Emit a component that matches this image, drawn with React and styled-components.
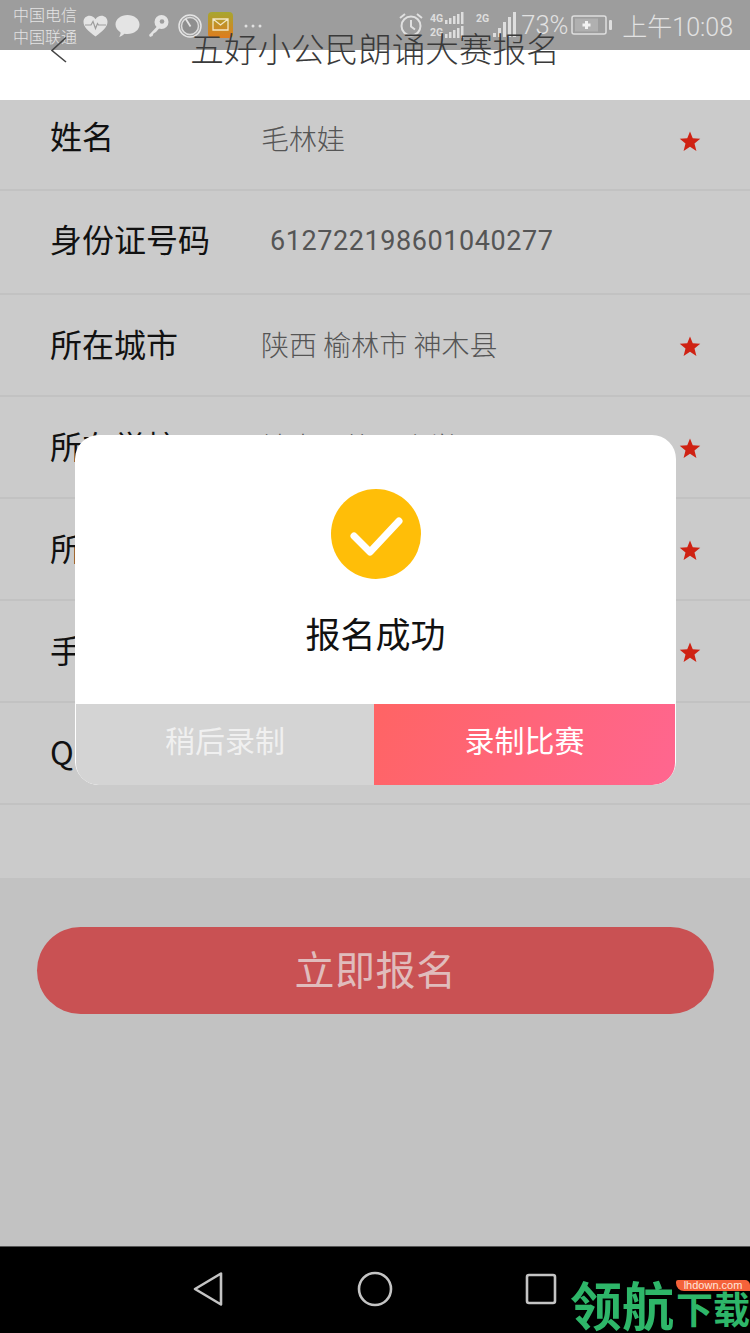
import React from 'react'
import styled, { createGlobalStyle } from 'styled-components'

const Global = createGlobalStyle`
  html, body { margin: 0; padding: 0; background: #c2c2c2; }
  #root { width: 750px; height: 1333px; overflow: hidden; }
  * { box-sizing: border-box; }
`

const Page = styled.div`
  position: relative;
  width: 750px;
  height: 1333px;
  display: flex;
  flex-direction: column;
  overflow: hidden;
  font-family: Roboto, "Noto Sans CJK SC", sans-serif;
`

const StatusBar = styled.div`
  height: 50px;
  flex: none;
  background: #9d9d9d;
  display: flex;
  align-items: flex-start;
  padding: 0 17px 0 13px;
  color: #e2e2e2;
`

const Carriers = styled.div`
  width: 70px;
  margin-top: 3px;
  font-size: 16px;
  line-height: 22px;
  font-family: "Noto Sans CJK SC", sans-serif;
  font-weight: 300;
  color: #e4e4e4;
`

const NotifyIcons = styled.div`
  display: flex;
  align-items: center;
  gap: 7px;
  margin-top: 13px;
  height: 25px;
`

const Spacer = styled.div`
  flex: 1;
`

const SystemIcons = styled.div`
  display: flex;
  align-items: center;
  margin-top: 11px;
  height: 28px;
`

const Percent = styled.span`
  font-size: 25.5px;
  font-weight: 300;
  margin-left: 3px;
  width: 48px;
`

const Clock = styled.span`
  font-size: 25px;
  font-weight: 300;
  margin-left: 9px;
  white-space: nowrap;
  font-family: Roboto, "Noto Sans CJK SC", sans-serif;
`

const Header = styled.div`
  height: 50px;
  flex: none;
  background: #fff;
  display: flex;
  justify-content: center;
  position: relative;
`

const BackIcon = styled.svg`
  position: absolute;
  left: 50px;
  top: -14px;
  width: 18px;
  height: 28px;
`

const Title = styled.div`
  margin-top: -24px;
  font-size: 33.6px;
  line-height: 44px;
  height: 44px;
  color: #3a3a3a;
  font-family: "Noto Sans CJK SC", sans-serif;
  font-weight: 300;
`

const Form = styled.div`
  background: #cbcbcb;
  height: 778px;
  flex: none;
`

const Row = styled.div`
  height: ${p => p.$h}px;
  border-bottom: 2px solid #c2c2c2;
  display: flex;
  align-items: center;
  padding-left: 50px;
  padding-right: 49px;
  padding-bottom: ${p => p.$shift || 0}px;
`

const Label = styled.div`
  width: ${p => p.$w || 211}px;
  padding-bottom: ${p => p.$lift}px;
  font-size: 32px;
  line-height: 40px;
  color: #111;
  font-family: "Noto Sans CJK SC", sans-serif;
  font-weight: 400;
  flex: none;
  white-space: nowrap;
`

const Value = styled.div`
  flex: 1;
  font-size: 28px;
  color: #555;
  font-family: "Noto Sans CJK SC", Roboto, sans-serif;
  font-weight: 300;
  white-space: nowrap;
`

const IdValue = styled(Value)`
  font-family: Roboto, sans-serif;
  font-size: 27px;
  font-weight: 400;
  letter-spacing: 0.57px;
`

const Star = styled.svg`
  width: 22px;
  height: 22px;
  margin-left: 1px;
  margin-top: ${p => p.$drop}px;
  flex: none;
`

const Bottom = styled.div`
  flex: 1;
  background: #c2c2c2;
  display: flex;
  flex-direction: column;
  padding: 49px 36px 0 37px;
`

const SubmitBtn = styled.div`
  height: 87px;
  border-radius: 44px;
  background: #c95153;
  color: #e0bcbc;
  font-size: 40px;
  font-weight: 400;
  font-family: "Noto Sans CJK SC", sans-serif;
  letter-spacing: 0.5px;
  display: flex;
  align-items: center;
  justify-content: center;
  padding-bottom: 6px;
`

const NavBar = styled.div`
  height: 87px;
  flex: none;
  background: #000;
  border-top: 1px solid #555;
  display: flex;
  align-items: center;
  position: relative;
  padding-left: 192px;
  gap: 133px;
  padding-bottom: 2px;
`

const Dialog = styled.div`
  position: absolute;
  left: 75px;
  top: 435px;
  width: 601px;
  height: 350px;
  border-radius: 24px;
  background: #fff;
  overflow: hidden;
  display: flex;
  flex-direction: column;
  padding: 0 1px;
`

const DialogBody = styled.div`
  flex: 1;
  display: flex;
  flex-direction: column;
  align-items: center;
  padding-top: 54px;
`

const CheckIcon = styled.svg`
  width: 90px;
  height: 90px;
`

const DialogText = styled.div`
  margin-top: 31px;
  font-size: 35px;
  line-height: 46px;
  color: #111;
  font-family: "Noto Sans CJK SC", sans-serif;
  font-weight: 400;
`

const DialogActions = styled.div`
  height: 81px;
  display: flex;
  flex: none;
  border-radius: 0 0 22px 22px;
  overflow: hidden;
`

const Action = styled.div`
  flex: none;
  width: ${p => p.$w}px;
  background: ${p => p.$primary ? 'linear-gradient(115deg, #ff6464 0%, #ff6690 100%)' : '#d4d4d4'};
  color: ${p => p.$primary ? '#fff' : '#f0f0f0'};
  font-size: 30px;
  font-family: "Noto Sans CJK SC", sans-serif;
  font-weight: 400;
  display: flex;
  align-items: center;
  justify-content: center;
  padding-bottom: 12px;
`

const Watermark = styled.div`
  position: absolute;
  left: 570px;
  top: 1274px;
  width: 180px;
  height: 59px;
  display: flex;
  align-items: flex-end;
  color: #2eb669;
  font-family: "Noto Sans CJK SC", sans-serif;
  font-weight: 700;
  white-space: nowrap;
`

const MarkBig = styled.span`
  font-size: 52px;
  line-height: 59px;
`

const MarkSmall = styled.span`
  font-size: 37px;
  line-height: 50px;
  margin-left: 2px;
`

const MarkTag = styled.div`
  position: absolute;
  right: 0;
  top: 6px;
  width: 74px;
  height: 11px;
  background: #f4623a;
  border-radius: 2px 5px 0 8px;
  color: #ffe6dc;
  font-family: "Liberation Sans", sans-serif;
  font-size: 11px;
  line-height: 11px;
  font-weight: 400;
  text-align: center;
`

const StarShape = ({ drop }) => (
  <Star viewBox="0 0 24 24" $drop={drop}>
    <path d="M12 1.500l3 7.600 8.200.5-6.300 5.200 2.100 8-7-4.400-7 4.400 2.100-8L.8 9.600 9 9.100z" fill="#cf2213" />
  </Star>
)

const rows = [
  { label: '姓名', value: '毛林娃', h: 91, star: true, shift: 14, lift: 6, drop: 7 },
  { label: '身份证号码', id: '612722198601040277', h: 104, shift: 2, lift: 6 },
  { label: '所在城市', value: '陕西 榆林市 神木县', h: 102, star: true, shift: 2, lift: 2, drop: 3 },
  { label: '所在学校', value: '神木县第一小学', h: 102, star: true, shift: 2, lift: 2, drop: 3 },
  { label: '所在年级', h: 102, star: true, shift: 2, lift: 2, drop: 3 },
  { label: '手机号码', h: 102, star: true, shift: 2, lift: 2, drop: 3 },
  { label: 'QQ号码', h: 102, shift: 2, lift: 2 },
]

const StatusLeft = () => (
  <NotifyIcons>
    <svg width="25" height="22" viewBox="0 0 25 22">
      <path d="M12.500 21.500C5 16 .5 12 .5 6.800.5 3 3.400.8 6.500.8c2.500 0 4.700 1.300 6 3.400 1.300-2.100 3.500-3.400 6-3.400 3.100 0 6 2.200 6 6 0 5.200-4.500 9.200-12 14.700z" fill="#e4e4e4" />
      <path d="M2 10h6l2-3.500 2.500 7 2-5 1 1.500h7.500" fill="none" stroke="#9d9d9d" strokeWidth="1.200" />
    </svg>
    <svg width="25" height="24" viewBox="0 0 25 24">
      <path d="M12.500 1C19 1 24.500 5 24.500 10.500S19 20 12.500 20c-1 0-2-.1-3-.3-1.500 1.500-3.500 2.800-5.500 3.100 1-1.200 1.600-2.800 1.600-4.400C2.600 16.600.5 13.800.5 10.500.5 5 6 1 12.500 1z" fill="#e4e4e4" />
    </svg>
    <svg width="22" height="24" viewBox="0 0 22 24">
      <circle cx="14.500" cy="8" r="7" fill="#e4e4e4" />
      <circle cx="15" cy="7.500" r="2.300" fill="#9d9d9d" />
      <path d="M10 12.500L2 21l1 2 2.500-1 1-2.500L9 18l3.500-4z" fill="#e4e4e4" />
    </svg>
    <svg width="24" height="24" viewBox="0 0 24 24" style={{ marginLeft: 2 }}>
      <circle cx="12" cy="12" r="11" fill="none" stroke="#e4e4e4" strokeWidth="1.500" />
      <circle cx="12" cy="12" r="8.500" fill="#8f8f8f" />
      <circle cx="12" cy="12" r="8.500" fill="none" stroke="#dcdcdc" strokeWidth="1.500" />
      <path d="M7.500 4.500l5 8" stroke="#e4e4e4" strokeWidth="1.800" />
    </svg>
    <svg width="25" height="26" viewBox="0 0 25 26" style={{ marginTop: -2, marginLeft: -1 }}>
      <defs>
        <linearGradient id="mailBg" x1="0" y1="0" x2="0" y2="1">
          <stop offset="0" stopColor="#a7a630" />
          <stop offset="1" stopColor="#df7c1e" />
        </linearGradient>
      </defs>
      <rect width="25" height="26" rx="4" fill="url(#mailBg)" />
      <path d="M5 7h15v11H5zM5 7l7.500 6L20 7" fill="none" stroke="#f2e6c4" strokeWidth="1.300" />
    </svg>
    <svg width="20" height="6" viewBox="0 0 20 6" style={{ marginLeft: 3, marginTop: 1 }}>
      <circle cx="3" cy="3" r="1.500" fill="#e0e0e0" />
      <circle cx="10" cy="3" r="1.500" fill="#e0e0e0" />
      <circle cx="17" cy="3" r="1.500" fill="#e0e0e0" />
    </svg>
  </NotifyIcons>
)

const Signal = ({ x, y }) => (
  <g fill="#dedede">
    {[0, 1, 2, 3, 4].map(i => (
      <rect key={i} x={x + i * 4} y={y + 8 - i * 2} width="2.500" height={4 + i * 2} />
    ))}
  </g>
)

const StatusRight = () => (
  <SystemIcons>
    <svg width="24" height="26" viewBox="0 0 24 26" style={{ marginRight: 7 }}>
      <circle cx="12" cy="14" r="9.500" fill="none" stroke="#e0e0e0" strokeWidth="2" />
      <path d="M12 8v6.500l4 3M1 6l5-4M23 6l-5-4" fill="none" stroke="#e0e0e0" strokeWidth="2" />
    </svg>
    <svg width="88" height="28" viewBox="0 0 88 28">
      <text x="0" y="11" fontSize="10.500" fontWeight="700" fontFamily="Roboto, sans-serif" fill="#dedede">4G</text>
      <text x="0" y="25" fontSize="10.500" fontWeight="700" fontFamily="Roboto, sans-serif" fill="#dedede">2G</text>
      <Signal x={15} y={1} />
      <Signal x={15} y={15} />
      <text x="46" y="11" fontSize="10.500" fontWeight="700" fontFamily="Roboto, sans-serif" fill="#dedede">2G</text>
      <g fill="#dedede">
        <rect x="63" y="22" width="3" height="4" />
        <rect x="68" y="17" width="3" height="9" />
        <rect x="73" y="11" width="3" height="15" />
        <rect x="78" y="6" width="3" height="20" />
        <rect x="83" y="1" width="3" height="25" />
      </g>
    </svg>
    <Percent>73%</Percent>
    <svg width="42" height="22" viewBox="0 0 42 22" style={{ marginLeft: 2 }}>
      <rect x="1" y="2" width="34" height="18" rx="2" fill="none" stroke="#dedede" strokeWidth="1.500" />
      <rect x="4" y="4.500" width="23" height="13" fill="#dedede" opacity="0.3" />
      <path d="M15.500 7v8M11.500 11h8" stroke="#f2f2f2" strokeWidth="3" />
      <rect x="38" y="6" width="3" height="10" rx="1" fill="#dedede" />
    </svg>
    <Clock>上午10:08</Clock>
  </SystemIcons>
)

export default function App() {
  return (
    <Page>
      <Global />
      <StatusBar>
        <Carriers>中国电信<br />中国联通</Carriers>
        <StatusLeft />
        <Spacer />
        <StatusRight />
      </StatusBar>
      <Header>
        <BackIcon viewBox="0 0 18 28">
          <path d="M16 1.500L2 14.500l14 11.500" fill="none" stroke="#444" strokeWidth="1.600" />
        </BackIcon>
        <Title>五好小公民朗诵大赛报名</Title>
      </Header>
      <Form>
        {rows.map(r => (
          <Row key={r.label} $h={r.h} $shift={r.shift}>
            <Label $w={r.id ? 220 : 211} $lift={r.lift}>{r.label}</Label>
            {r.id ? <IdValue>{r.id}</IdValue> : <Value>{r.value}</Value>}
            {r.star && <StarShape drop={r.drop} />}
          </Row>
        ))}
      </Form>
      <Bottom>
        <SubmitBtn>立即报名</SubmitBtn>
      </Bottom>
      <NavBar>
        <svg width="32" height="36" viewBox="0 0 32 36">
          <path d="M29 2.500v31L3 18z" fill="none" stroke="#c4c4c4" strokeWidth="2.600" strokeLinejoin="round" />
        </svg>
        <svg width="36" height="36" viewBox="0 0 36 36">
          <circle cx="18" cy="18" r="16" fill="none" stroke="#c4c4c4" strokeWidth="2.600" />
        </svg>
        <svg width="32" height="32" viewBox="0 0 32 32" style={{ marginLeft: -1, marginTop: 0 }}>
          <rect x="2" y="2" width="28" height="28" rx="2" fill="none" stroke="#c4c4c4" strokeWidth="2.600" />
        </svg>
      </NavBar>
      <Dialog>
        <DialogBody>
          <CheckIcon viewBox="0 0 90 90">
            <circle cx="45" cy="45" r="45" fill="#ffbe08" />
            <path d="M23 47l16 16 29-31" fill="none" stroke="#fff" strokeWidth="7" strokeLinecap="round" strokeLinejoin="round" />
          </CheckIcon>
          <DialogText>报名成功</DialogText>
        </DialogBody>
        <DialogActions>
          <Action $w={298}>稍后录制</Action>
          <Action $w={301} $primary>录制比赛</Action>
        </DialogActions>
      </Dialog>
      <Watermark>
        <MarkBig>领航</MarkBig>
        <MarkSmall>下载</MarkSmall>
        <MarkTag>lhdown.com</MarkTag>
      </Watermark>
    </Page>
  )
}
